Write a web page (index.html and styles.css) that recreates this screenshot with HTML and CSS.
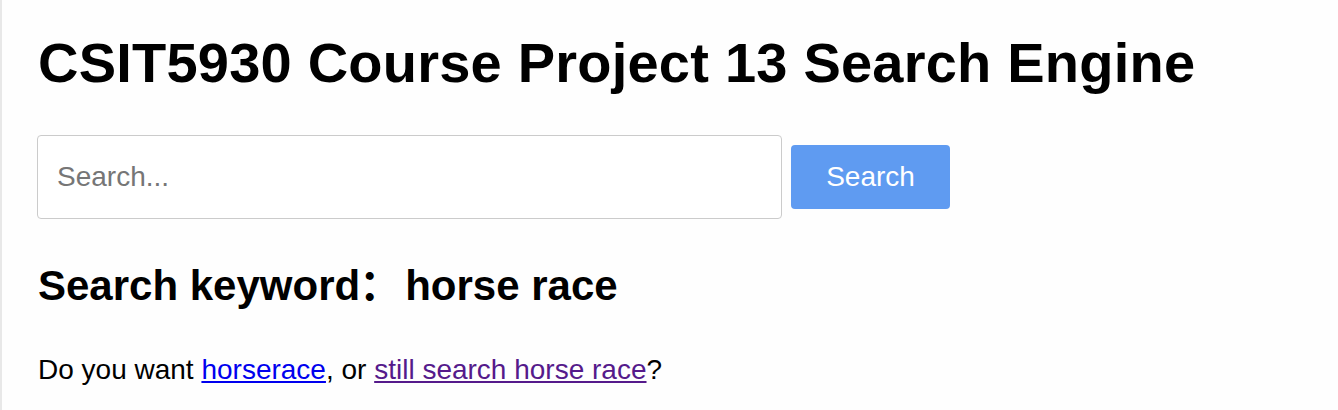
FILE: index.html
```html
<!DOCTYPE html>
<html lang="en">
<head>
<meta charset="utf-8">
<title>CSIT5930 Search Engine</title>
<link rel="stylesheet" href="styles.css">
</head>
<body>
<div class="page">
  <h1 class="title">CSIT5930 Course Project 13 Search Engine</h1>
  <form class="search-form" onsubmit="return false;">
    <input class="search-input" type="text" placeholder="Search...">
    <button class="search-button" type="submit">Search</button>
  </form>
  <h2 class="keyword">Search keyword<span class="colon">：</span>horse race</h2>
  <p class="suggest">Do you want <a class="link" href="#horserace">horserace</a>, or <a class="link visited" href="#horse-race">still search horse race</a>?</p>
</div>
</body>
</html>
```

FILE: styles.css
```css
html, body {
  margin: 0;
  padding: 0;
  background: #fefefe;
}

body {
  font-family: "Liberation Sans", Arial, "Noto Sans CJK SC", sans-serif;
  color: #000;
}

.page {
  min-height: 410px;
  box-sizing: border-box;
  border-left: 2px solid #e8e8e8;
  padding: 31px 36px 0 35px;
}

.title {
  margin: 0 0 0 1px;
  font-size: 56px;
  line-height: 64px;
  font-weight: bold;
  letter-spacing: 0.22px;
}

.search-form {
  display: flex;
  align-items: center;
  gap: 9px;
  margin-top: 40px;
}

.search-input {
  box-sizing: border-box;
  width: 745px;
  height: 84px;
  border: 1px solid #cbcbcb;
  border-radius: 4px;
  padding: 0 19px;
  font-family: "Liberation Sans", Arial, sans-serif;
  font-size: 28px;
  color: #000;
  background: #fff;
  outline: none;
}

.search-input::placeholder {
  color: #767676;
}

.search-button {
  box-sizing: border-box;
  width: 159px;
  height: 64px;
  border: none;
  border-radius: 4px;
  background: #5f9bf1;
  color: #fff;
  font-family: "Liberation Sans", Arial, sans-serif;
  font-size: 28px;
  padding: 0;
  cursor: pointer;
}

.keyword {
  margin: 43px 0 0 1px;
  font-size: 42px;
  line-height: 48px;
  font-weight: bold;
  font-family: "Liberation Sans", Arial, "Noto Sans CJK SC", sans-serif;
}

.colon {
  margin-left: -1px;
  margin-right: 4px;
}

.suggest {
  margin: 44px 0 0 1px;
  font-size: 28px;
  line-height: 32px;
}

.link {
  color: #0000ee;
}

.link.visited {
  color: #551a8b;
}
```
